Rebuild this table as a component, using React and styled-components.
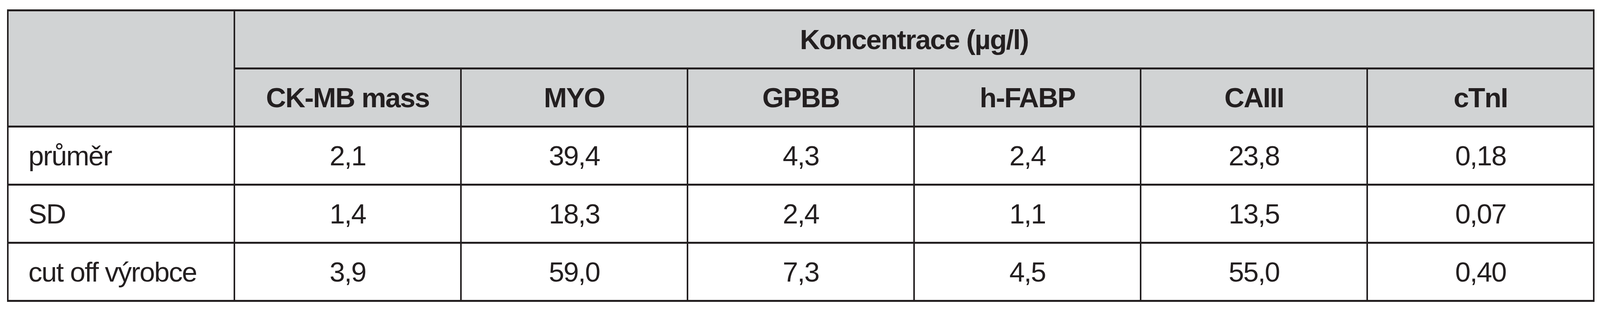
import React from 'react';
import styled, { createGlobalStyle } from 'styled-components';

const GlobalStyle = createGlobalStyle`
  html, body {
    margin: 0;
    padding: 0;
    background: #ffffff;
  }
  body {
    font-family: "Liberation Sans", Arial, sans-serif;
    color: #231f20;
  }
`;

// widths are given as shares of the window so the 4350px-wide table fits whatever width the page gets
const Page = styled.div`
  height: 800px;
  padding: 24px 0 0 0.44vw;
  box-sizing: border-box;
  overflow: hidden;
`;

const Table = styled.table`
  table-layout: fixed;
  width: 99.13vw;
  border-collapse: collapse;
  border: 4px solid #231f20;
`;

const Col = styled.col`
  width: calc(99.13vw / 7);
`;

const Row = styled.tr`
  height: 149px;
`;

const Cell = styled.td`
  border-top: 5px solid #231f20;
  border-bottom: 5px solid #231f20;
  border-left: 4px solid #231f20;
  border-right: 4px solid #231f20;
  padding: 0 ${p => (p.$label ? '1.24vw' : '0')};
  text-align: ${p => (p.$label ? 'left' : 'center')};
  vertical-align: middle;
  font-size: 71px;
  letter-spacing: -2px;
  font-weight: ${p => (p.$head ? 700 : 400)};
  background: ${p => (p.$head ? '#d1d3d4' : '#ffffff')};
  color: #231f20;
  white-space: nowrap;
`;

const columns = ['CK-MB mass', 'MYO', 'GPBB', 'h-FABP', 'CAIII', 'cTnI'];

const rows = [
  { label: 'průměr', values: ['2,1', '39,4', '4,3', '2,4', '23,8', '0,18'] },
  { label: 'SD', values: ['1,4', '18,3', '2,4', '1,1', '13,5', '0,07'] },
  { label: 'cut off výrobce', values: ['3,9', '59,0', '7,3', '4,5', '55,0', '0,40'] },
];

export default function App() {
  return (
    <Page>
      <GlobalStyle />
      <Table>
        <colgroup>
          <Col />
          {columns.map(c => (
            <Col key={c} />
          ))}
        </colgroup>
        <thead>
          <Row>
            <Cell as="th" $head rowSpan={2} />
            <Cell as="th" $head colSpan={6}>
              Koncentrace (µg/l)
            </Cell>
          </Row>
          <Row>
            {columns.map(c => (
              <Cell as="th" $head key={c}>
                {c}
              </Cell>
            ))}
          </Row>
        </thead>
        <tbody>
          {rows.map(r => (
            <Row key={r.label}>
              <Cell $label>{r.label}</Cell>
              {r.values.map((v, i) => (
                <Cell key={i}>{v}</Cell>
              ))}
            </Row>
          ))}
        </tbody>
      </Table>
    </Page>
  );
}
